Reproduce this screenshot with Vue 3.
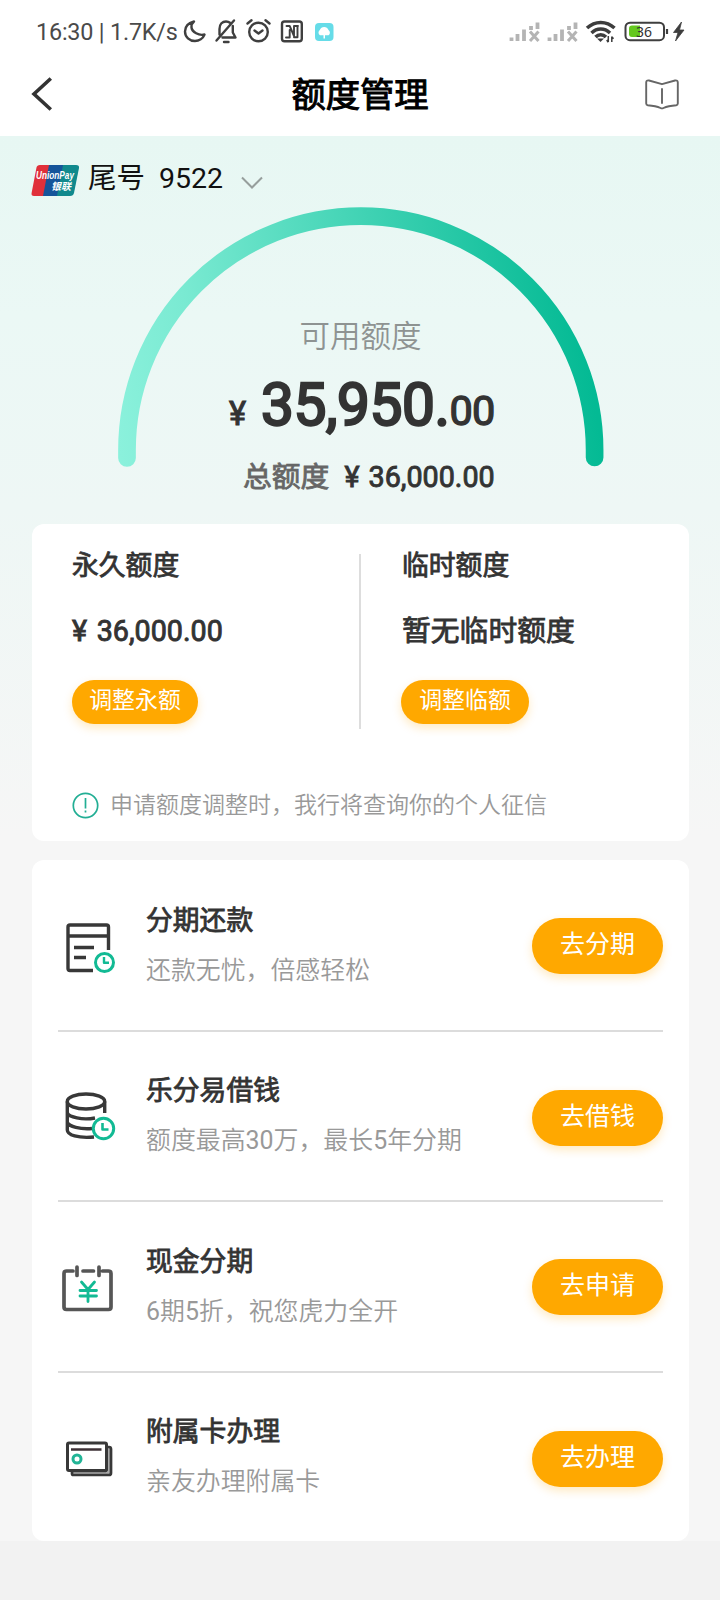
<script setup>
const services = [
  { icon: 'bill', title: '分期还款', desc: '还款无忧，倍感轻松', action: '去分期' },
  { icon: 'coins', title: '乐分易借钱', desc: '额度最高30万，最长5年分期', action: '去借钱' },
  { icon: 'cash', title: '现金分期', desc: '6期5折，祝您虎力全开', action: '去申请' },
  { icon: 'card', title: '附属卡办理', desc: '亲友办理附属卡', action: '去办理' },
]

// Splits a description so that its numbers can carry a heavier weight.
const parts = (text) => text.split(/(\d+)/).filter(Boolean)
const isNumber = (text) => /^\d+$/.test(text)
</script>

<template>
  <div class="page">
    <div class="status">
      <span class="clock">16:30 | 1.7K/s</span>
      <svg class="status-left" width="160" height="34" viewBox="180 14 160 34" fill="none" stroke="#3f3f3f" stroke-width="2.400" stroke-linecap="round" stroke-linejoin="round">
        <path d="M194 21.500C188 23 185 27 185 31.500C185 37 189.500 41 195 41C199 41 203 38.500 204.500 34.500C199 36 192 32 191.500 27.500C191.300 25 192 23 194 21.500Z" />
        <path d="M234 20.500L216.500 40.500M219.500 34.500V29C219.500 24 222.500 21.500 226 21.500C227.500 21.500 229 22 230 22.800M232.800 26V32.500L235.500 37.500H222.500M224 42H228.500" />
        <circle cx="258.500" cy="32" r="9.300" />
        <path d="M247.500 23.500L251.500 20.300M269.500 23.500L265.500 20.300M254.500 30.500L258.500 33.500L262.500 30.500" />
        <rect x="282" y="21.500" width="19.800" height="19.800" rx="2.500" />
        <path d="M286.500 26H289.700L294 36V26H298M286 37.500H289.700V30M294 37.200H297.500V26" stroke-width="1.900" />
        <rect x="315" y="23" width="18.500" height="18" rx="4" fill="#66dce8" stroke="none" />
        <path d="M320 35.300A3.200 3.200 0 0 1 319.800 30A4.700 4.700 0 0 1 328.500 30A3.200 3.200 0 0 1 328.500 35.300ZM323.500 35H325V38.500H323.500Z" fill="#fff" stroke="none" />
      </svg>
      <svg class="status-right" width="185" height="34" viewBox="505 14 185 34" fill="none">
        <g v-for="x in [0, 38]" :key="x" :transform="`translate(${x} 0)`" stroke="#b4b4b4" stroke-width="3.800">
          <path d="M511.500 41V37.500M517.500 41V34M524 41V29.500M531 30V26M537.500 29V22.500" />
          <path d="M530 31.500L538.500 41M538.500 31.500L530 41" stroke-width="3" />
        </g>
        <g stroke="#3d3d3d" stroke-width="3.500">
          <path d="M587 28C595 20.500 606.500 20.500 614.500 28M591.500 33C597 27.800 604.500 27.800 610 33M595.500 37C598.500 34 603 34 606 37" />
          <path d="M597 38.500H604L600.500 42Z" fill="#3d3d3d" stroke="none" />
          <path d="M608.300 36V42M606.700 40L608.300 42.200M611.800 42V36.500M613.500 38.800L611.800 36.700" stroke-width="1.500" />
        </g>
        <rect x="625.500" y="22.700" width="38.500" height="17.500" rx="4.500" stroke="#3f3f3f" stroke-width="2" />
        <path d="M632 25.500H640V37H632Q629 37 629 34V28.500Q629 25.500 632 25.500Z" fill="#64c81e" />
        <text x="636" y="36.800" class="battery-text">36</text>
        <path d="M667 29V34" stroke="#3f3f3f" stroke-width="2.200" />
        <path d="M681.500 22L673.500 32.500H678L675.500 41L684 30H679.500Z" fill="#3d3d3d" stroke="#3d3d3d" stroke-width=".8" />
      </svg>
    </div>

    <header class="nav">
      <svg class="back" width="24" height="34" viewBox="0 0 24 34" fill="none" stroke="#333" stroke-width="3.600"><path d="M21.800 1.500L5 17L21.800 32.500" /></svg>
      <h1>额度管理</h1>
      <svg width="34" height="31" viewBox="0 0 34 31" fill="none" stroke="#666" stroke-width="1.900" stroke-linejoin="round" stroke-linecap="round">
        <path d="M17 5.200L4 1.500Q1.200 1 1.200 3.500V24.500Q1.200 26 2.700 26.200Q11 26.800 15.500 29Q17 29.800 18.500 29Q23 26.800 31.300 26.200Q32.800 26 32.800 24.500V3.500Q32.800 1 30 1.500ZM17 10V24" />
      </svg>
    </header>

    <main class="content">
      <div class="card-picker">
        <svg class="union" width="49" height="33" viewBox="0 0 49 33">
          <path d="M9 1H20L14 32H3Q0 32 .6 29L5.500 3.500Q6 1 9 1Z" fill="#e0303a" />
          <path d="M18 1H33L27 32H12Z" fill="#15549a" />
          <path d="M32 1H45Q48.500 1 48 4L43 29Q42.300 32 39 32H26Z" fill="#10898d" />
          <text x="5" y="15" class="up-en" textLength="38" lengthAdjust="spacingAndGlyphs">UnionPay</text>
          <text x="20" y="26" class="up-cn">银联</text>
        </svg>
        <span class="tail">尾号</span>
        <span class="tail-number">9522</span>
        <svg class="down" width="24" height="14" viewBox="0 0 24 14" fill="none" stroke="#969e9c" stroke-width="2"><path d="M2 1.500L12 11.500L22 1.500" /></svg>
      </div>

      <section class="gauge">
        <svg class="arc" width="500" height="270" viewBox="110 200 500 270" fill="none">
          <defs>
            <linearGradient id="arc-fill" gradientUnits="userSpaceOnUse" x1="118" y1="440" x2="590" y2="370">
              <stop offset="0" stop-color="#8bf1dc" />
              <stop offset=".18" stop-color="#7aead2" />
              <stop offset="1" stop-color="#04ba94" />
            </linearGradient>
          </defs>
          <path d="M127 458V450A233.800 233.800 0 0 1 594.600 450V457.500" stroke="url(#arc-fill)" stroke-width="17.700" stroke-linecap="round" />
        </svg>
        <div class="available-label">可用额度</div>
        <div class="available"><span class="yen">¥</span><span class="whole">35,950.</span><span class="cents">00</span></div>
        <div class="total"><span class="total-label">总额度</span><span class="total-value">¥ 36,000.00</span></div>
      </section>

      <section class="limits">
        <div class="limit-columns">
          <div class="limit">
            <h2>永久额度</h2>
            <p class="money">¥ 36,000.00</p>
            <button>调整永额</button>
          </div>
          <i class="separator"></i>
          <div class="limit temporary">
            <h2>临时额度</h2>
            <p>暂无临时额度</p>
            <button>调整临额</button>
          </div>
        </div>
        <div class="notice">
          <svg width="27" height="27" viewBox="0 0 27 27" fill="none" stroke="#22ae94" stroke-width="1.700"><circle cx="13.500" cy="13.500" r="12.200" /><path d="M13.500 6V16.500M13.500 18.500V20.500" /></svg>
          <span>申请额度调整时，我行将查询你的个人征信</span>
        </div>
      </section>

      <section class="services">
        <article v-for="s in services" :key="s.icon" class="service" :class="s.icon">
          <svg class="service-icon" width="56" height="56" viewBox="0 0 56 56" fill="none" stroke="#383838" stroke-width="3.400" stroke-linejoin="round">
            <template v-if="s.icon === 'bill'">
              <path d="M33 51.500H10Q8 51.500 8 49.500V8Q8 6 10 6H46.500Q48.500 6 48.500 8V31M8 17H48.500" />
              <path d="M14 28.500H34M14 38.500H26" stroke-width="3.500" />
              <g stroke="#12ba94"><circle cx="44.500" cy="43.500" r="9" stroke-width="3" /><path d="M44 38V43.800H49" stroke-width="2.400" /></g>
            </template>
            <template v-else-if="s.icon === 'coins'">
              <ellipse cx="26" cy="13.500" rx="18.700" ry="7.500" />
              <path d="M7.300 13.500V42C7.300 47 18 50.500 34 49M44.700 13.500V25M7.300 25C9 29 22 32.500 35 30M7.300 34.500C9 38.500 20 41.500 32 40.500" />
              <g stroke="#12ba94"><circle cx="43.500" cy="40.500" r="10.200" stroke-width="3" /><path d="M42.500 35V41.500H48.500" stroke-width="2.600" /></g>
            </template>
            <template v-else-if="s.icon === 'cash'">
              <g stroke="#565656" stroke-width="3.700" stroke-linecap="round">
                <path d="M14 7H7.500Q5 7 5 9.500V43Q5 45.500 7.500 45.500H49.500Q52 45.500 52 43V9.500Q52 7 49.500 7H43.500M24 7H34.500M18 3V11.500M40 3V11.500" />
              </g>
              <path d="M22.500 18L29 25.500L35.500 18M29 25.500V37.500M21 26.500H37.500M21 32H37.500" stroke="#12ba94" stroke-width="2.800" stroke-linecap="round" />
            </template>
            <template v-else>
              <path d="M12 42V44.500Q12 46 13.500 46H49Q51 46 51 44V20Q51 18 49 18H46.500V40Q46.500 42 44.500 42Z" fill="#aaa" stroke-width="2.700" />
              <rect x="7.500" y="14" width="39" height="27.500" rx="1.500" fill="#fff" stroke-width="3" />
              <path d="M11 20.500H41.500" stroke="#3d3035" stroke-width="2.500" />
              <circle cx="17" cy="30" r="4" stroke="#22b496" stroke-width="3" />
            </template>
          </svg>
          <div class="service-copy">
            <h3>{{ s.title }}</h3>
            <p><span v-for="(part, i) in parts(s.desc)" :key="i" :class="{ number: isNumber(part) }">{{ part }}</span></p>
          </div>
          <button>{{ s.action }}</button>
        </article>
      </section>
    </main>
  </div>
</template>

<style>
body { margin: 0; background: #f2f2f2; }
</style>

<style scoped>
* { box-sizing: border-box; }
h1, h2, h3, p { margin: 0; font-weight: 400; }
svg { display: block; flex: none; }
button { display: block; border: 0; font: inherit; color: #fff; background: #ffa800; box-shadow: 0 4px 10px rgba(255, 168, 0, .24); padding: 0; white-space: nowrap; }

.page { width: 720px; height: 1600px; overflow: hidden; background: #f2f2f2; color: #333; font-family: Roboto, "Noto Sans CJK SC", sans-serif; }
.status { height: 62px; padding: 14px 30px 0 36px; display: flex; background: #fff; }
.clock { width: 144px; font-size: 23.400px; line-height: 36px; color: #4a4a4a; white-space: nowrap; letter-spacing: -.2px; }
.status-right { margin-left: auto; }
.battery-text { font: 400 14px "Noto Sans", sans-serif; fill: #333; }

.nav { height: 74px; padding: 0 41px 9px 29px; display: flex; align-items: center; justify-content: space-between; background: #fff; }
.back { margin-bottom: 2px; }
.nav h1 { margin-left: 22px; font-size: 34.300px; line-height: 50px; color: #000; -webkit-text-stroke: 1px #000; }

.content { height: 1405px; padding: 0 31px 0 32px; background: linear-gradient(#e7f7f3 0, #ebf8f5 180px, #eef7f5 370px, #f6f6f6 700px); }
.card-picker { height: 64px; padding-top: 21px; display: flex; align-items: center; color: #111; font-size: 28.500px; line-height: 40px; margin-left: -1px; }
.union { margin-top: 3px; overflow: visible; }
.up-en { font: italic 700 10.500px "Liberation Sans", sans-serif; fill: #fff; }
.up-cn { font: italic 700 10px "Noto Sans CJK SC", sans-serif; fill: #fff; }
.tail { margin-left: 8px; }
.tail-number { margin-left: 14px; }
.down { margin: 9px 0 0 17px; }

.gauge { position: relative; height: 324px; text-align: center; }
.arc { position: absolute; left: 78px; top: 0; }
.gauge div { position: relative; white-space: nowrap; }
.available-label { padding-top: 116px; font-size: 30.500px; line-height: 42px; color: #8e9392; font-weight: 350; }
.available { display: flex; align-items: baseline; justify-content: flex-start; padding-left: 197px; margin-top: 11px; height: 72px; line-height: 72px; }
.yen { width: 32px; text-align: left; font-size: 32.500px; -webkit-text-stroke: 1px #333; }
.whole { font-size: 58.500px; letter-spacing: -.4px; -webkit-text-stroke: 2.400px #333; }
.cents { font-size: 41.500px; -webkit-text-stroke: 1.300px #333; letter-spacing: -.8px; }
.total { display: flex; align-items: baseline; padding-left: 211px; margin-top: 15px; line-height: 42px; font-size: 28.800px; }
.total-label { color: #666; -webkit-text-stroke: .8px #666; }
.total-value { margin-left: 15px; font-size: 28.700px; word-spacing: 2px; -webkit-text-stroke: .9px #333; }

.limits { height: 317px; border-radius: 12px; background: #fff; padding: 30px 0 0 40px; }
.limit-columns { display: flex; height: 175px; }
.limit { width: 287px; }
.separator { width: 2px; background: #ddd; }
.limit h2 { font-size: 26.800px; line-height: 40px; margin-top: -8px; -webkit-text-stroke: .8px #333; }
.limit p { font-size: 28.800px; line-height: 42px; margin-top: 24px; -webkit-text-stroke: .8px #333; }
.limit .money { font-size: 28.700px; word-spacing: 2.500px; -webkit-text-stroke: .9px #333; }
.limit button { margin-top: 28px; width: 126px; height: 44px; border-radius: 22px; font-size: 22.900px; line-height: 42px; padding-bottom: 2px; }
.temporary { padding-left: 41px; }
.temporary button { width: 128px; margin-left: -1px; }
.notice { display: flex; align-items: center; margin-top: 62px; height: 28px; font-size: 23px; color: #999; white-space: nowrap; font-weight: 350; }
.notice span { margin-left: 11px; line-height: 28px; padding-top: 2px; }

.services { margin-top: 19px; height: 681px; border-radius: 12px; background: #fff; padding: 1px 26px 0; }
.service { height: 171px; border-bottom: 2px solid #dcdcdc; display: flex; align-items: center; }
.coins { height: 170px; }
.service:last-child { border-bottom: 0; height: 167px; }
.service-icon { margin: 2px 0 0 2px; }
.coins .service-icon { margin-top: 0; }
.cash .service-icon { margin: 10px 0 0 1px; }
.cash .service-copy { margin-left: 31px; }
.card .service-icon { margin-top: 0; }
.service-copy { margin-left: 30px; flex: 1; }
.service h3 { font-size: 26.800px; line-height: 40px; -webkit-text-stroke: .8px #333; }
.service p { font-size: 24.900px; line-height: 38px; margin-top: 11px; color: #999; font-weight: 350; white-space: nowrap; }
.number { font-weight: 400; }
.coins .service-copy, .card .service-copy { margin-bottom: 1px; }
.service button { width: 131px; height: 56px; border-radius: 28px; font-size: 25px; line-height: 54px; padding-bottom: 2px; margin-top: 1px; }
.coins button { margin-top: 3px; }
.card button { margin-top: 5px; }
</style>
